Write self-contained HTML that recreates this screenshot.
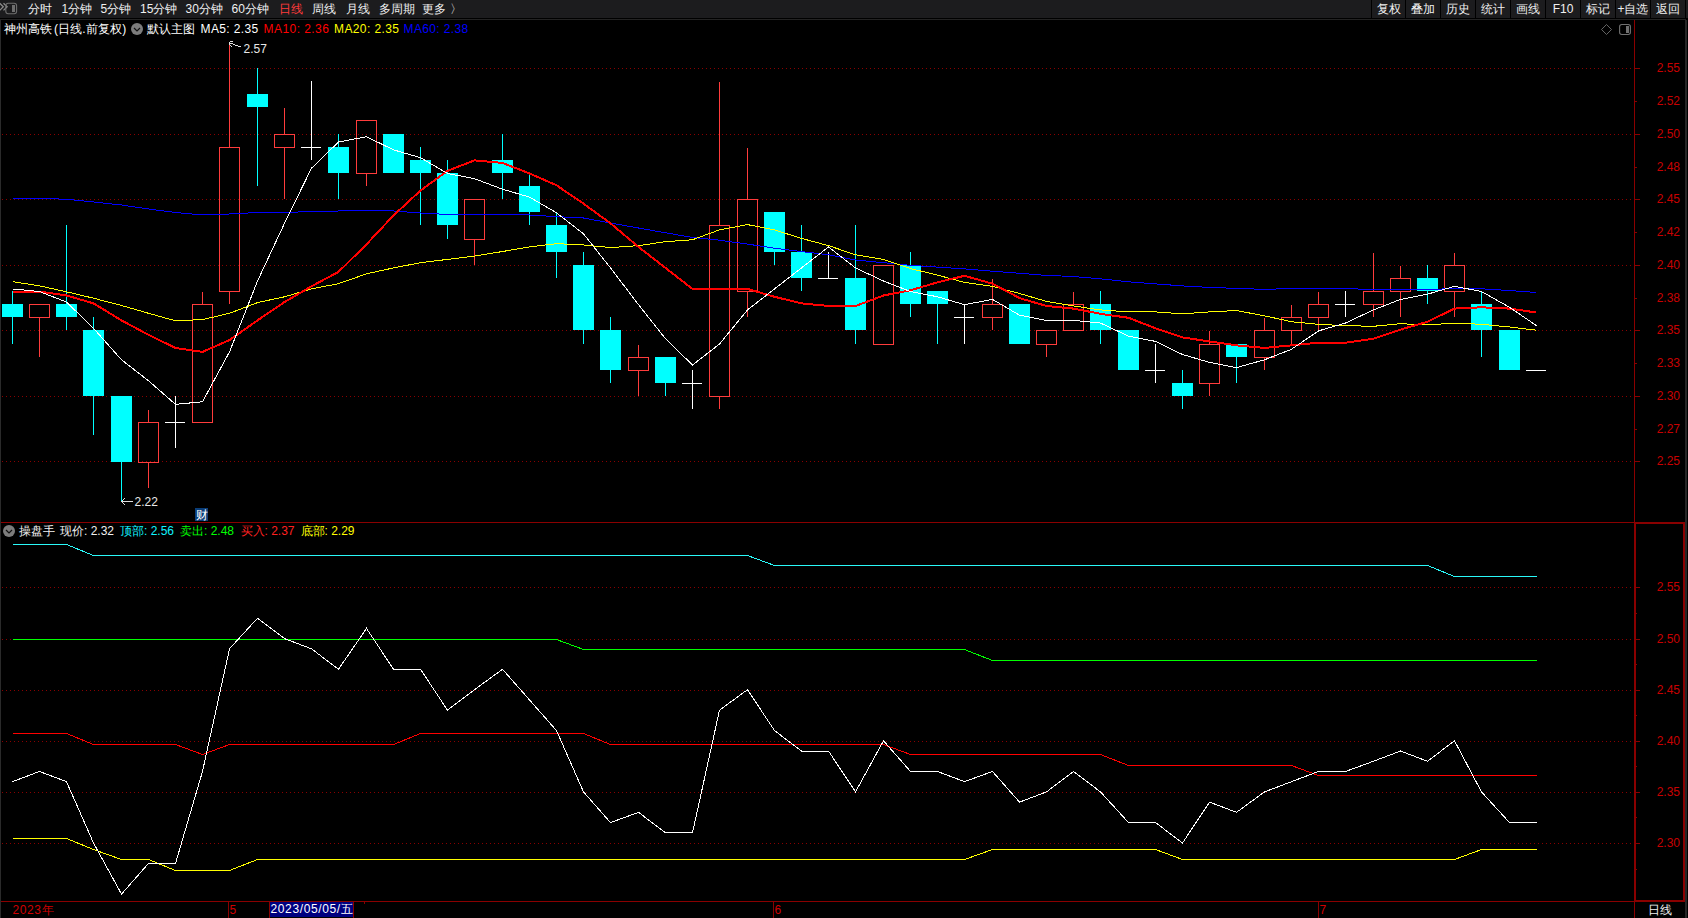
<!DOCTYPE html><html><head><meta charset="utf-8"><style>
html,body{margin:0;padding:0;background:#000;width:1688px;height:918px;overflow:hidden;font-family:'Liberation Sans', sans-serif;}
.t{position:absolute;font-size:12px;line-height:14px;white-space:nowrap;color:#fff;}
svg{position:absolute;left:0;top:0;}
text{font-family:'Liberation Sans', sans-serif;}
</style></head><body>
<div style="position:absolute;left:0;top:0;width:1688px;height:18px;background:#1c1c1e"></div><div style="position:absolute;left:0;top:18px;width:1688px;height:1px;background:#000"></div><div style="position:absolute;left:0;top:19px;width:1686px;height:1px;background:#232323"></div><div style="position:absolute;left:0;top:20px;width:1px;height:898px;background:#2a2a2a"></div><div style="position:absolute;left:1685px;top:20px;width:2px;height:898px;background:#262626"></div><div style="position:absolute;left:1371px;top:0;width:1px;height:18px;background:#000"></div><div style="position:absolute;left:1405px;top:0;width:1px;height:18px;background:#000"></div><div style="position:absolute;left:1440px;top:0;width:1px;height:18px;background:#000"></div><div style="position:absolute;left:1475px;top:0;width:1px;height:18px;background:#000"></div><div style="position:absolute;left:1510px;top:0;width:1px;height:18px;background:#000"></div><div style="position:absolute;left:1545px;top:0;width:1px;height:18px;background:#000"></div><div style="position:absolute;left:1580px;top:0;width:1px;height:18px;background:#000"></div><div style="position:absolute;left:1615px;top:0;width:1px;height:18px;background:#000"></div><div style="position:absolute;left:1650px;top:0;width:1px;height:18px;background:#000"></div><div style="position:absolute;left:1685px;top:0;width:1px;height:18px;background:#000"></div><div class="t" style="left:28.0px;top:2px;color:#f0f0f0">分时</div><div class="t" style="left:61.4px;top:2px;color:#f0f0f0">1分钟</div><div class="t" style="left:100.5px;top:2px;color:#f0f0f0">5分钟</div><div class="t" style="left:140.0px;top:2px;color:#f0f0f0">15分钟</div><div class="t" style="left:185.6px;top:2px;color:#f0f0f0">30分钟</div><div class="t" style="left:231.6px;top:2px;color:#f0f0f0">60分钟</div><div class="t" style="left:279.2px;top:2px;color:#ff3b3b">日线</div><div class="t" style="left:312.1px;top:2px;color:#f0f0f0">周线</div><div class="t" style="left:346.2px;top:2px;color:#f0f0f0">月线</div><div class="t" style="left:379.2px;top:2px;color:#f0f0f0">多周期</div><div class="t" style="left:422.2px;top:2px;color:#f0f0f0">更多</div><div class="t" style="left:450.3px;top:2px;color:#f0f0f0">〉</div><div class="t" style="left:1372px;top:2px;width:33px;text-align:center;color:#f0f0f0">复权</div><div class="t" style="left:1406px;top:2px;width:34px;text-align:center;color:#f0f0f0">叠加</div><div class="t" style="left:1441px;top:2px;width:34px;text-align:center;color:#f0f0f0">历史</div><div class="t" style="left:1476px;top:2px;width:34px;text-align:center;color:#f0f0f0">统计</div><div class="t" style="left:1511px;top:2px;width:34px;text-align:center;color:#f0f0f0">画线</div><div class="t" style="left:1546px;top:2px;width:34px;text-align:center;color:#f0f0f0">F10</div><div class="t" style="left:1581px;top:2px;width:34px;text-align:center;color:#f0f0f0">标记</div><div class="t" style="left:1616px;top:2px;width:34px;text-align:center;color:#f0f0f0">+自选</div><div class="t" style="left:1651px;top:2px;width:34px;text-align:center;color:#f0f0f0">返回</div><svg width="20" height="18" style="left:0;top:0"><path d="M-0.3,3.2 L3.3,6.8 L-0.3,10.4 M3.5,3.2 L7.1,6.8 L3.5,10.4" stroke="#8c8c8c" stroke-width="1.3" fill="none"/><rect x="5.8" y="3.3" width="10.8" height="10.5" rx="2.5" fill="none" stroke="#6e6e6e" stroke-width="1.1"/><rect x="12" y="5" width="3" height="7" fill="#6e6e6e"/></svg><div class="t" style="left:3.8px;top:22px;letter-spacing:.15px">神州高铁<span style="margin-left:1.5px">(</span>日线.前复权)</div><svg width="14" height="14" style="left:130px;top:22px"><circle cx="7" cy="7" r="6" fill="#7c7c7c"/><path d="M4,6 L7,9 L10,6" stroke="#111" stroke-width="1.2" fill="none"/></svg><div class="t" style="left:147.2px;top:22px">默认主图</div><div class="t" style="left:200.6px;top:22px;letter-spacing:.35px">MA5: 2.35</div><div class="t" style="left:263.5px;top:22px;color:#ff0000;letter-spacing:.45px">MA10: 2.36</div><div class="t" style="left:334px;top:22px;color:#ffff00;letter-spacing:.4px">MA20: 2.35</div><div class="t" style="left:403.6px;top:22px;color:#0000ff;letter-spacing:.35px">MA60: 2.38</div><svg width="36" height="16" style="left:1598px;top:20px"><path d="M8.5,4.5 L13.5,9.5 L8.5,14.5 L3.5,9.5 Z" fill="none" stroke="#6e6e6e" stroke-width="0.9"/><rect x="21.6" y="4.5" width="10.8" height="10" rx="2.2" fill="none" stroke="#707070" stroke-width="1.1"/><rect x="28" y="6" width="3" height="7" fill="#707070"/></svg><svg width="14" height="14" style="left:2px;top:524px"><circle cx="7" cy="7" r="6" fill="#7c7c7c"/><path d="M4,6 L7,9 L10,6" stroke="#111" stroke-width="1.2" fill="none"/></svg><div class="t" style="left:19.0px;top:524px;color:#f0f0f0">操盘手</div><div class="t" style="left:60.0px;top:524px;color:#f0f0f0">现价: 2.32</div><div class="t" style="left:120.0px;top:524px;color:#10f4ff">顶部: 2.56</div><div class="t" style="left:180.0px;top:524px;color:#00ff00">卖出: 2.48</div><div class="t" style="left:240.5px;top:524px;color:#ff2020">买入: 2.37</div><div class="t" style="left:300.5px;top:524px;color:#ffff00">底部: 2.29</div><div style="position:absolute;left:195px;top:508px;width:13px;height:13px;background:#0a3d78"></div><div class="t" style="left:195.5px;top:507.5px;color:#fff">财</div><div class="t" style="left:12.5px;top:903px;color:#d00000;letter-spacing:.6px">2023年</div><div class="t" style="left:229.5px;top:902.5px;color:#d00000">5</div><div class="t" style="left:774.5px;top:902.5px;color:#d00000">6</div><div class="t" style="left:1319.5px;top:902.5px;color:#d00000">7</div><div style="position:absolute;left:270px;top:902px;width:83px;height:15px;background:#000080"></div><div style="position:absolute;left:269px;top:902px;width:1px;height:16px;background:#8a0000"></div><div class="t" style="left:270.5px;top:902px;color:#fff;letter-spacing:.62px">2023/05/05/五</div><div style="position:absolute;left:353px;top:902px;width:1px;height:16px;background:#8a0000"></div><div style="position:absolute;left:364px;top:902px;width:1px;height:2px;background:#8a0000"></div><div class="t" style="left:1648px;top:903px;color:#f0f0f0">日线</div><svg width="1688" height="918" shape-rendering="crispEdges"><line x1="2" y1="68.5" x2="1633" y2="68.5" stroke="#8a0000" stroke-dasharray="1 3"/><line x1="2" y1="134.5" x2="1633" y2="134.5" stroke="#8a0000" stroke-dasharray="1 3"/><line x1="2" y1="199.5" x2="1633" y2="199.5" stroke="#8a0000" stroke-dasharray="1 3"/><line x1="2" y1="265.5" x2="1633" y2="265.5" stroke="#8a0000" stroke-dasharray="1 3"/><line x1="2" y1="330.5" x2="1633" y2="330.5" stroke="#8a0000" stroke-dasharray="1 3"/><line x1="2" y1="396.5" x2="1633" y2="396.5" stroke="#8a0000" stroke-dasharray="1 3"/><line x1="2" y1="461.5" x2="1633" y2="461.5" stroke="#8a0000" stroke-dasharray="1 3"/><line x1="2" y1="587.5" x2="1633" y2="587.5" stroke="#8a0000" stroke-dasharray="1 3"/><line x1="2" y1="639.5" x2="1633" y2="639.5" stroke="#8a0000" stroke-dasharray="1 3"/><line x1="2" y1="690.5" x2="1633" y2="690.5" stroke="#8a0000" stroke-dasharray="1 3"/><line x1="2" y1="741.5" x2="1633" y2="741.5" stroke="#8a0000" stroke-dasharray="1 3"/><line x1="2" y1="792.5" x2="1633" y2="792.5" stroke="#8a0000" stroke-dasharray="1 3"/><line x1="2" y1="843.5" x2="1633" y2="843.5" stroke="#8a0000" stroke-dasharray="1 3"/><rect x="1634" y="20" width="1" height="502" fill="#8a0000"/><rect x="1634" y="522" width="2" height="380" fill="#8a0000"/><rect x="1634" y="902" width="1" height="16" fill="#8a0000"/><rect x="1" y="522" width="1633" height="1" fill="#8a0000"/><rect x="1634" y="522" width="50" height="2" fill="#8a0000"/><rect x="1683" y="522" width="2" height="380" fill="#8a0000"/><rect x="1" y="901" width="1633" height="1" fill="#8a0000"/><rect x="1634" y="900" width="51" height="2" fill="#8a0000"/><rect x="1635" y="68" width="5" height="1" fill="#8a0000"/><rect x="1635" y="101" width="2" height="1" fill="#8a0000"/><rect x="1635" y="134" width="5" height="1" fill="#8a0000"/><rect x="1635" y="167" width="2" height="1" fill="#8a0000"/><rect x="1635" y="199" width="5" height="1" fill="#8a0000"/><rect x="1635" y="232" width="2" height="1" fill="#8a0000"/><rect x="1635" y="265" width="5" height="1" fill="#8a0000"/><rect x="1635" y="298" width="2" height="1" fill="#8a0000"/><rect x="1635" y="330" width="5" height="1" fill="#8a0000"/><rect x="1635" y="363" width="2" height="1" fill="#8a0000"/><rect x="1635" y="396" width="5" height="1" fill="#8a0000"/><rect x="1635" y="429" width="2" height="1" fill="#8a0000"/><rect x="1635" y="461" width="5" height="1" fill="#8a0000"/><rect x="1636" y="587" width="4" height="1" fill="#8a0000"/><rect x="1636" y="639" width="4" height="1" fill="#8a0000"/><rect x="1636" y="690" width="4" height="1" fill="#8a0000"/><rect x="1636" y="741" width="4" height="1" fill="#8a0000"/><rect x="1636" y="792" width="4" height="1" fill="#8a0000"/><rect x="1636" y="843" width="4" height="1" fill="#8a0000"/><rect x="1636" y="613" width="1" height="1" fill="#8a0000"/><rect x="1636" y="664" width="1" height="1" fill="#8a0000"/><rect x="1636" y="715" width="1" height="1" fill="#8a0000"/><rect x="1636" y="766" width="1" height="1" fill="#8a0000"/><rect x="1636" y="817" width="1" height="1" fill="#8a0000"/><rect x="1636" y="869" width="1" height="1" fill="#8a0000"/><rect x="228" y="902" width="1" height="16" fill="#8a0000"/><rect x="773" y="902" width="1" height="16" fill="#8a0000"/><rect x="1318" y="902" width="1" height="16" fill="#8a0000"/><rect x="12" y="291" width="1" height="53" fill="#00ffff"/><rect x="2" y="304" width="21" height="13" fill="#00ffff"/><rect x="29.5" y="304.5" width="20" height="13" fill="none" stroke="#ff3c3c"/><rect x="39" y="318" width="1" height="39" fill="#ff3c3c"/><rect x="66" y="225" width="1" height="105" fill="#00ffff"/><rect x="56" y="304" width="21" height="13" fill="#00ffff"/><rect x="93" y="317" width="1" height="118" fill="#00ffff"/><rect x="83" y="330" width="21" height="66" fill="#00ffff"/><rect x="121" y="396" width="1" height="105" fill="#00ffff"/><rect x="111" y="396" width="21" height="66" fill="#00ffff"/><rect x="138.5" y="422.5" width="20" height="40" fill="none" stroke="#ff3c3c"/><rect x="148" y="410" width="1" height="12" fill="#ff3c3c"/><rect x="148" y="463" width="1" height="25" fill="#ff3c3c"/><rect x="175" y="396" width="1" height="52" fill="#fff"/><rect x="165" y="422" width="20" height="1" fill="#fff"/><rect x="192.5" y="304.5" width="20" height="118" fill="none" stroke="#ff3c3c"/><rect x="202" y="292" width="1" height="12" fill="#ff3c3c"/><rect x="219.5" y="147.5" width="20" height="144" fill="none" stroke="#ff3c3c"/><rect x="229" y="43" width="1" height="104" fill="#ff3c3c"/><rect x="229" y="292" width="1" height="12" fill="#ff3c3c"/><rect x="257" y="68" width="1" height="118" fill="#00ffff"/><rect x="247" y="94" width="21" height="13" fill="#00ffff"/><rect x="274.5" y="134.5" width="20" height="13" fill="none" stroke="#ff3c3c"/><rect x="284" y="108" width="1" height="26" fill="#ff3c3c"/><rect x="284" y="148" width="1" height="51" fill="#ff3c3c"/><rect x="311" y="81" width="1" height="79" fill="#fff"/><rect x="301" y="147" width="20" height="1" fill="#fff"/><rect x="338" y="134" width="1" height="65" fill="#00ffff"/><rect x="328" y="147" width="21" height="26" fill="#00ffff"/><rect x="356.5" y="120.5" width="20" height="53" fill="none" stroke="#ff3c3c"/><rect x="366" y="174" width="1" height="12" fill="#ff3c3c"/><rect x="393" y="134" width="1" height="39" fill="#00ffff"/><rect x="383" y="134" width="21" height="39" fill="#00ffff"/><rect x="420" y="147" width="1" height="78" fill="#00ffff"/><rect x="410" y="160" width="21" height="13" fill="#00ffff"/><rect x="447" y="160" width="1" height="79" fill="#00ffff"/><rect x="437" y="173" width="21" height="52" fill="#00ffff"/><rect x="464.5" y="199.5" width="20" height="40" fill="none" stroke="#ff3c3c"/><rect x="474" y="240" width="1" height="25" fill="#ff3c3c"/><rect x="502" y="134" width="1" height="65" fill="#00ffff"/><rect x="492" y="160" width="21" height="13" fill="#00ffff"/><rect x="529" y="173" width="1" height="52" fill="#00ffff"/><rect x="519" y="186" width="21" height="26" fill="#00ffff"/><rect x="556" y="212" width="1" height="66" fill="#00ffff"/><rect x="546" y="225" width="21" height="27" fill="#00ffff"/><rect x="583" y="252" width="1" height="92" fill="#00ffff"/><rect x="573" y="265" width="21" height="65" fill="#00ffff"/><rect x="610" y="317" width="1" height="66" fill="#00ffff"/><rect x="600" y="330" width="21" height="40" fill="#00ffff"/><rect x="628.5" y="357.5" width="20" height="13" fill="none" stroke="#ff3c3c"/><rect x="638" y="345" width="1" height="12" fill="#ff3c3c"/><rect x="638" y="371" width="1" height="25" fill="#ff3c3c"/><rect x="665" y="357" width="1" height="39" fill="#00ffff"/><rect x="655" y="357" width="21" height="26" fill="#00ffff"/><rect x="692" y="370" width="1" height="39" fill="#fff"/><rect x="682" y="383" width="20" height="1" fill="#fff"/><rect x="709.5" y="225.5" width="20" height="171" fill="none" stroke="#ff3c3c"/><rect x="719" y="82" width="1" height="143" fill="#ff3c3c"/><rect x="719" y="397" width="1" height="12" fill="#ff3c3c"/><rect x="737.5" y="199.5" width="20" height="92" fill="none" stroke="#ff3c3c"/><rect x="747" y="148" width="1" height="51" fill="#ff3c3c"/><rect x="747" y="292" width="1" height="25" fill="#ff3c3c"/><rect x="774" y="212" width="1" height="53" fill="#00ffff"/><rect x="764" y="212" width="21" height="40" fill="#00ffff"/><rect x="801" y="225" width="1" height="66" fill="#00ffff"/><rect x="791" y="252" width="21" height="26" fill="#00ffff"/><rect x="828" y="252" width="1" height="26" fill="#fff"/><rect x="818" y="278" width="20" height="1" fill="#fff"/><rect x="855" y="225" width="1" height="119" fill="#00ffff"/><rect x="845" y="278" width="21" height="52" fill="#00ffff"/><rect x="873.5" y="265.5" width="20" height="79" fill="none" stroke="#ff3c3c"/><rect x="910" y="252" width="1" height="65" fill="#00ffff"/><rect x="900" y="265" width="21" height="39" fill="#00ffff"/><rect x="937" y="291" width="1" height="53" fill="#00ffff"/><rect x="927" y="291" width="21" height="13" fill="#00ffff"/><rect x="964" y="304" width="1" height="40" fill="#fff"/><rect x="954" y="317" width="20" height="1" fill="#fff"/><rect x="982.5" y="304.5" width="20" height="13" fill="none" stroke="#ff3c3c"/><rect x="992" y="279" width="1" height="25" fill="#ff3c3c"/><rect x="992" y="318" width="1" height="12" fill="#ff3c3c"/><rect x="1019" y="304" width="1" height="40" fill="#00ffff"/><rect x="1009" y="304" width="21" height="40" fill="#00ffff"/><rect x="1036.5" y="330.5" width="20" height="14" fill="none" stroke="#ff3c3c"/><rect x="1046" y="345" width="1" height="12" fill="#ff3c3c"/><rect x="1063.5" y="304.5" width="20" height="26" fill="none" stroke="#ff3c3c"/><rect x="1073" y="292" width="1" height="12" fill="#ff3c3c"/><rect x="1100" y="291" width="1" height="53" fill="#00ffff"/><rect x="1090" y="304" width="21" height="26" fill="#00ffff"/><rect x="1128" y="330" width="1" height="40" fill="#00ffff"/><rect x="1118" y="330" width="21" height="40" fill="#00ffff"/><rect x="1155" y="344" width="1" height="39" fill="#fff"/><rect x="1145" y="370" width="20" height="1" fill="#fff"/><rect x="1182" y="370" width="1" height="39" fill="#00ffff"/><rect x="1172" y="383" width="21" height="13" fill="#00ffff"/><rect x="1199.5" y="344.5" width="20" height="39" fill="none" stroke="#ff3c3c"/><rect x="1209" y="331" width="1" height="13" fill="#ff3c3c"/><rect x="1209" y="384" width="1" height="12" fill="#ff3c3c"/><rect x="1236" y="344" width="1" height="39" fill="#00ffff"/><rect x="1226" y="344" width="21" height="13" fill="#00ffff"/><rect x="1254.5" y="330.5" width="20" height="27" fill="none" stroke="#ff3c3c"/><rect x="1264" y="318" width="1" height="12" fill="#ff3c3c"/><rect x="1264" y="358" width="1" height="12" fill="#ff3c3c"/><rect x="1281.5" y="317.5" width="20" height="13" fill="none" stroke="#ff3c3c"/><rect x="1291" y="305" width="1" height="12" fill="#ff3c3c"/><rect x="1291" y="331" width="1" height="13" fill="#ff3c3c"/><rect x="1308.5" y="304.5" width="20" height="13" fill="none" stroke="#ff3c3c"/><rect x="1318" y="292" width="1" height="12" fill="#ff3c3c"/><rect x="1318" y="318" width="1" height="12" fill="#ff3c3c"/><rect x="1345" y="291" width="1" height="26" fill="#fff"/><rect x="1335" y="304" width="20" height="1" fill="#fff"/><rect x="1363.5" y="291.5" width="20" height="13" fill="none" stroke="#ff3c3c"/><rect x="1373" y="253" width="1" height="38" fill="#ff3c3c"/><rect x="1373" y="305" width="1" height="12" fill="#ff3c3c"/><rect x="1390.5" y="278.5" width="20" height="13" fill="none" stroke="#ff3c3c"/><rect x="1400" y="266" width="1" height="12" fill="#ff3c3c"/><rect x="1400" y="292" width="1" height="25" fill="#ff3c3c"/><rect x="1427" y="265" width="1" height="39" fill="#00ffff"/><rect x="1417" y="278" width="21" height="13" fill="#00ffff"/><rect x="1444.5" y="265.5" width="20" height="26" fill="none" stroke="#ff3c3c"/><rect x="1454" y="253" width="1" height="12" fill="#ff3c3c"/><rect x="1454" y="292" width="1" height="25" fill="#ff3c3c"/><rect x="1481" y="291" width="1" height="66" fill="#00ffff"/><rect x="1471" y="304" width="21" height="26" fill="#00ffff"/><rect x="1509" y="330" width="1" height="40" fill="#00ffff"/><rect x="1499" y="330" width="21" height="40" fill="#00ffff"/><rect x="1526" y="370" width="20" height="1" fill="#fff"/><polyline points="12.5,198.50 39.5,198.50 66.5,199.20 93.5,202.00 121.5,205.00 148.5,209.00 175.5,212.50 202.5,215.00 229.5,214.00 257.5,212.50 284.5,212.50 311.5,211.50 338.5,211.00 366.5,210.50 393.5,211.00 420.5,213.00 447.5,214.50 474.5,214.50 502.5,214.50 529.5,215.00 556.5,216.60 583.5,218.00 610.5,223.00 638.5,228.00 665.5,232.80 692.5,237.40 719.5,240.20 747.5,244.10 774.5,248.20 801.5,251.60 828.5,254.70 855.5,260.00 883.5,262.70 910.5,265.30 937.5,267.10 964.5,268.90 992.5,271.20 1019.5,273.30 1046.5,275.40 1073.5,276.50 1100.5,278.80 1128.5,281.80 1155.5,283.90 1182.5,285.90 1209.5,287.40 1236.5,288.40 1264.5,289.40 1291.5,288.50 1318.5,288.50 1345.5,288.50 1373.5,289.60 1400.5,289.60 1427.5,289.60 1454.5,288.50 1481.5,288.80 1509.5,290.50 1536.5,292.50" fill="none" stroke="#0000ff" stroke-width="1"/><polyline points="12.5,281.60 39.5,285.90 66.5,291.80 93.5,298.20 121.5,305.50 148.5,313.30 175.5,320.80 202.5,319.60 229.5,313.30 257.5,302.60 284.5,296.79 311.5,288.92 338.5,283.67 366.5,273.83 393.5,267.92 420.5,262.68 447.5,259.40 474.5,256.12 502.5,251.52 529.5,246.93 556.5,243.65 583.5,244.96 610.5,247.59 638.5,245.62 665.5,241.68 692.5,239.72 719.5,229.88 747.5,224.63 774.5,229.88 801.5,238.40 828.5,245.62 855.5,254.80 883.5,259.40 910.5,268.58 937.5,275.14 964.5,282.36 992.5,286.29 1019.5,293.51 1046.5,301.38 1073.5,305.97 1100.5,309.91 1128.5,311.88 1155.5,311.88 1182.5,313.84 1209.5,311.88 1236.5,310.56 1264.5,315.81 1291.5,321.72 1318.5,324.34 1345.5,325.65 1373.5,326.31 1400.5,323.68 1427.5,325.00 1454.5,323.03 1481.5,324.34 1509.5,326.96 1536.5,330.24" fill="none" stroke="#ffff00" stroke-width="1"/><polyline points="12.5,291.54 39.5,291.54 66.5,295.48 93.5,303.35 121.5,320.40 148.5,334.84 175.5,347.96 202.5,351.89 229.5,340.08 257.5,320.40 284.5,302.04 311.5,286.29 338.5,271.86 366.5,244.31 393.5,215.44 420.5,190.52 447.5,170.84 474.5,160.34 502.5,162.96 529.5,173.46 556.5,185.27 583.5,203.64 610.5,223.32 638.5,246.93 665.5,267.92 692.5,288.92 719.5,288.92 747.5,288.92 774.5,296.79 801.5,303.35 828.5,305.97 855.5,305.97 883.5,295.48 910.5,290.23 937.5,282.36 964.5,275.80 992.5,283.67 1019.5,298.10 1046.5,305.97 1073.5,308.60 1100.5,313.84 1128.5,317.78 1155.5,328.28 1182.5,337.46 1209.5,341.40 1236.5,345.33 1264.5,347.96 1291.5,345.33 1318.5,342.71 1345.5,342.71 1373.5,338.77 1400.5,329.59 1427.5,321.72 1454.5,308.60 1481.5,307.28 1509.5,308.60 1536.5,312.53" fill="none" stroke="#ff0000" stroke-width="2"/><polyline points="12.5,288.92 39.5,291.54 66.5,302.04 93.5,328.28 121.5,359.76 148.5,380.76 175.5,404.37 202.5,401.75 229.5,351.89 257.5,281.04 284.5,223.32 311.5,168.21 338.5,141.97 366.5,136.72 393.5,149.84 420.5,157.72 447.5,173.46 474.5,178.71 502.5,189.20 529.5,197.08 556.5,212.82 583.5,233.81 610.5,267.92 638.5,304.66 665.5,338.77 692.5,365.01 719.5,344.02 747.5,309.91 774.5,288.92 801.5,267.92 828.5,246.93 855.5,267.92 883.5,281.04 910.5,291.54 937.5,296.79 964.5,304.66 992.5,299.41 1019.5,315.16 1046.5,320.40 1073.5,320.40 1100.5,323.03 1128.5,336.15 1155.5,341.40 1182.5,354.52 1209.5,362.39 1236.5,367.64 1264.5,359.76 1291.5,349.27 1318.5,330.90 1345.5,323.03 1373.5,309.91 1400.5,299.41 1427.5,294.16 1454.5,286.29 1481.5,291.54 1509.5,307.28 1536.5,325.65" fill="none" stroke="#ffffff" stroke-width="1"/><polyline points="12.5,544.50 39.5,544.50 66.5,544.50 93.5,555.50 121.5,555.50 148.5,555.50 175.5,555.50 202.5,555.50 229.5,555.50 257.5,555.50 284.5,555.50 311.5,555.50 338.5,555.50 366.5,555.50 393.5,555.50 420.5,555.50 447.5,555.50 474.5,555.50 502.5,555.50 529.5,555.50 556.5,555.50 583.5,555.50 610.5,555.50 638.5,555.50 665.5,555.50 692.5,555.50 719.5,555.50 747.5,555.50 774.5,565.50 801.5,565.50 828.5,565.50 855.5,565.50 883.5,565.50 910.5,565.50 937.5,565.50 964.5,565.50 992.5,565.50 1019.5,565.50 1046.5,565.50 1073.5,565.50 1100.5,565.50 1128.5,565.50 1155.5,565.50 1182.5,565.50 1209.5,565.50 1236.5,565.50 1264.5,565.50 1291.5,565.50 1318.5,565.50 1345.5,565.50 1373.5,565.50 1400.5,565.50 1427.5,565.50 1454.5,576.50 1481.5,576.50 1509.5,576.50 1536.5,576.50" fill="none" stroke="#2af8f8" stroke-width="1"/><polyline points="12.5,639.50 39.5,639.50 66.5,639.50 93.5,639.50 121.5,639.50 148.5,639.50 175.5,639.50 202.5,639.50 229.5,639.50 257.5,639.50 284.5,639.50 311.5,639.50 338.5,639.50 366.5,639.50 393.5,639.50 420.5,639.50 447.5,639.50 474.5,639.50 502.5,639.50 529.5,639.50 556.5,639.50 583.5,649.50 610.5,649.50 638.5,649.50 665.5,649.50 692.5,649.50 719.5,649.50 747.5,649.50 774.5,649.50 801.5,649.50 828.5,649.50 855.5,649.50 883.5,649.50 910.5,649.50 937.5,649.50 964.5,649.50 992.5,660.50 1019.5,660.50 1046.5,660.50 1073.5,660.50 1100.5,660.50 1128.5,660.50 1155.5,660.50 1182.5,660.50 1209.5,660.50 1236.5,660.50 1264.5,660.50 1291.5,660.50 1318.5,660.50 1345.5,660.50 1373.5,660.50 1400.5,660.50 1427.5,660.50 1454.5,660.50 1481.5,660.50 1509.5,660.50 1536.5,660.50" fill="none" stroke="#00ff00" stroke-width="1"/><polyline points="12.5,733.50 39.5,733.50 66.5,733.50 93.5,744.50 121.5,744.50 148.5,744.50 175.5,744.50 202.5,754.50 229.5,744.50 257.5,744.50 284.5,744.50 311.5,744.50 338.5,744.50 366.5,744.50 393.5,744.50 420.5,733.50 447.5,733.50 474.5,733.50 502.5,733.50 529.5,733.50 556.5,733.50 583.5,733.50 610.5,744.50 638.5,744.50 665.5,744.50 692.5,744.50 719.5,744.50 747.5,744.50 774.5,744.50 801.5,744.50 828.5,744.50 855.5,744.50 883.5,744.50 910.5,754.50 937.5,754.50 964.5,754.50 992.5,754.50 1019.5,754.50 1046.5,754.50 1073.5,754.50 1100.5,754.50 1128.5,765.50 1155.5,765.50 1182.5,765.50 1209.5,765.50 1236.5,765.50 1264.5,765.50 1291.5,765.50 1318.5,775.50 1345.5,775.50 1373.5,775.50 1400.5,775.50 1427.5,775.50 1454.5,775.50 1481.5,775.50 1509.5,775.50 1536.5,775.50" fill="none" stroke="#ff0000" stroke-width="1"/><polyline points="12.5,838.50 39.5,838.50 66.5,838.50 93.5,849.50 121.5,859.50 148.5,859.50 175.5,870.50 202.5,870.50 229.5,870.50 257.5,859.50 284.5,859.50 311.5,859.50 338.5,859.50 366.5,859.50 393.5,859.50 420.5,859.50 447.5,859.50 474.5,859.50 502.5,859.50 529.5,859.50 556.5,859.50 583.5,859.50 610.5,859.50 638.5,859.50 665.5,859.50 692.5,859.50 719.5,859.50 747.5,859.50 774.5,859.50 801.5,859.50 828.5,859.50 855.5,859.50 883.5,859.50 910.5,859.50 937.5,859.50 964.5,859.50 992.5,849.50 1019.5,849.50 1046.5,849.50 1073.5,849.50 1100.5,849.50 1128.5,849.50 1155.5,849.50 1182.5,859.50 1209.5,859.50 1236.5,859.50 1264.5,859.50 1291.5,859.50 1318.5,859.50 1345.5,859.50 1373.5,859.50 1400.5,859.50 1427.5,859.50 1454.5,859.50 1481.5,849.50 1509.5,849.50 1536.5,849.50" fill="none" stroke="#ffff00" stroke-width="1"/><polyline points="12.5,781.68 39.5,771.46 66.5,781.68 93.5,843.00 121.5,894.10 148.5,863.44 175.5,863.44 202.5,771.46 229.5,648.82 257.5,618.16 284.5,638.60 311.5,648.82 338.5,669.26 366.5,628.38 393.5,669.26 420.5,669.26 447.5,710.14 474.5,689.70 502.5,669.26 529.5,699.92 556.5,730.58 583.5,791.90 610.5,822.56 638.5,812.34 665.5,832.78 692.5,832.78 719.5,710.14 747.5,689.70 774.5,730.58 801.5,751.02 828.5,751.02 855.5,791.90 883.5,740.80 910.5,771.46 937.5,771.46 964.5,781.68 992.5,771.46 1019.5,802.12 1046.5,791.90 1073.5,771.46 1100.5,791.90 1128.5,822.56 1155.5,822.56 1182.5,843.00 1209.5,802.12 1236.5,812.34 1264.5,791.90 1291.5,781.68 1318.5,771.46 1345.5,771.46 1373.5,761.24 1400.5,751.02 1427.5,761.24 1454.5,740.80 1481.5,791.90 1509.5,822.56 1536.5,822.56" fill="none" stroke="#ffffff" stroke-width="1"/><rect x="230" y="41" width="3" height="1" fill="#e0e0e0"/><rect x="229" y="42" width="1" height="1" fill="#e0e0e0"/><rect x="229" y="43" width="4" height="1" fill="#e0e0e0"/><rect x="229" y="44" width="1" height="1" fill="#e0e0e0"/><rect x="233" y="44" width="2" height="1" fill="#e0e0e0"/><rect x="230" y="45" width="1" height="1" fill="#e0e0e0"/><rect x="235" y="45" width="3" height="1" fill="#e0e0e0"/><rect x="231" y="46" width="1" height="1" fill="#e0e0e0"/><rect x="238" y="46" width="3" height="1" fill="#e0e0e0"/><path d="M121.5,501.5 L133,501.5 M121.5,501.5 L125,498 M121.5,501.5 L125,505" stroke="#ddd" fill="none" stroke-width="1"/></svg><svg width="1688" height="918"><text x="1680" y="72" fill="#c80000" text-anchor="end" font-size="12">2.55</text><text x="1680" y="105" fill="#c80000" text-anchor="end" font-size="12">2.52</text><text x="1680" y="138" fill="#c80000" text-anchor="end" font-size="12">2.50</text><text x="1680" y="171" fill="#c80000" text-anchor="end" font-size="12">2.48</text><text x="1680" y="203" fill="#c80000" text-anchor="end" font-size="12">2.45</text><text x="1680" y="236" fill="#c80000" text-anchor="end" font-size="12">2.42</text><text x="1680" y="269" fill="#c80000" text-anchor="end" font-size="12">2.40</text><text x="1680" y="302" fill="#c80000" text-anchor="end" font-size="12">2.38</text><text x="1680" y="334" fill="#c80000" text-anchor="end" font-size="12">2.35</text><text x="1680" y="367" fill="#c80000" text-anchor="end" font-size="12">2.33</text><text x="1680" y="400" fill="#c80000" text-anchor="end" font-size="12">2.30</text><text x="1680" y="433" fill="#c80000" text-anchor="end" font-size="12">2.27</text><text x="1680" y="465" fill="#c80000" text-anchor="end" font-size="12">2.25</text><text x="1680" y="591" fill="#c80000" text-anchor="end" font-size="12">2.55</text><text x="1680" y="643" fill="#c80000" text-anchor="end" font-size="12">2.50</text><text x="1680" y="694" fill="#c80000" text-anchor="end" font-size="12">2.45</text><text x="1680" y="745" fill="#c80000" text-anchor="end" font-size="12">2.40</text><text x="1680" y="796" fill="#c80000" text-anchor="end" font-size="12">2.35</text><text x="1680" y="847" fill="#c80000" text-anchor="end" font-size="12">2.30</text><text x="243.5" y="53" fill="#e8e8e8" text-anchor="start" font-size="12">2.57</text><text x="134.5" y="506" fill="#e8e8e8" text-anchor="start" font-size="12">2.22</text></svg></body></html>
